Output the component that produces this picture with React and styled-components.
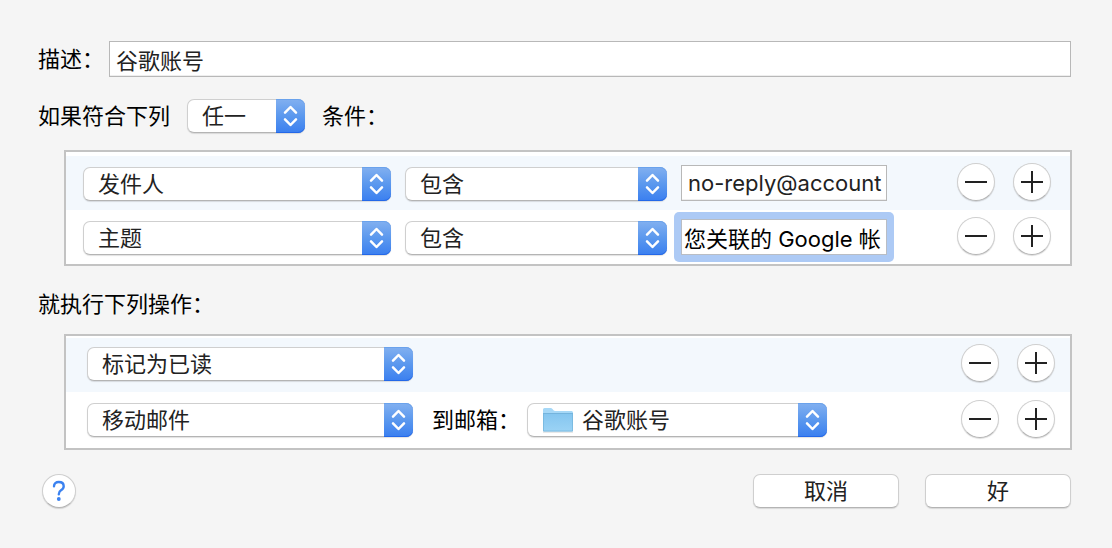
import React from "react";
import styled, { createGlobalStyle } from "styled-components";

const GlobalStyle = createGlobalStyle`
  *, *::before, *::after { box-sizing: border-box; }
  body { margin: 0; background: #f5f5f5; }
  body, button, input, select {
    font-family: Inter, "Noto Sans CJK SC", sans-serif;
    font-size: 22px;
    line-height: 28px;
    color: #000;
  }
`;

const Dialog = styled.form`
  display: flex;
  flex-direction: column;
  padding: 41px 40px 40px 38px;
`;

const DescriptionRow = styled.div`
  display: flex;
  align-items: center;
  gap: 5px;
  padding-right: 1px;
`;

const MatchRow = styled.div`
  display: flex;
  align-items: center;
  gap: 17px;
  margin: 22px 0 17px;
`;

const Label = styled.label`
  white-space: nowrap;
`;

const Heading = styled.h2`
  margin: 24px 0 16px;
  font-size: 22px;
  font-weight: 400;
  line-height: 28px;
`;

const TextInput = styled.input`
  height: 36px;
  min-width: 0;
  padding: 0 2px 0 ${(p) => (p.$focused ? 2 : 6)}px;
  flex: ${(p) => (p.$width ? `0 0 ${p.$width}px` : "1")};
  border: 1px solid ${(p) => (p.$focused ? "#b9bdc4" : "#b8b8b8")};
  border-radius: 0;
  outline: none;
  background: #fff;
  color: ${(p) => (p.$focused ? "#000" : "#222")};
  box-shadow: ${(p) => (p.$focused ? "0 0 0 7px #adcaf5" : "inset 0 -1px 0 #eee")};
  ${(p) => p.$focused && "clip-path: inset(-7px round 5px);"}
`;

const Popup = styled.span`
  position: relative;
  display: block;
  flex: 0 0 ${(p) => p.$width}px;
  height: 34px;
`;

const PopupSelect = styled.select`
  appearance: none;
  display: block;
  width: 100%;
  height: 34px;
  padding: 0 34px 0 ${(p) => (p.$icon ? 54 : 14)}px;
  border: 1px solid #cfcfcf;
  border-bottom-color: #b4b4b4;
  border-radius: 7px;
  background: #fff;
  color: #222;
  box-shadow: 0 1px 1px rgba(0, 0, 0, 0.12);
`;

const PopupArrows = styled.span`
  position: absolute;
  top: 0;
  right: 0;
  width: 29px;
  height: 34px;
  border-radius: 0 7px 7px 0;
  background: linear-gradient(#82b0f0, #5b98ee 50%, #3a7ff0);
  box-shadow: inset 0 1px 0 #6aa2ec, inset 0 -1px 0 #2468e8;
  pointer-events: none;

  svg { display: block; }
`;

const PopupIcon = styled.span`
  position: absolute;
  top: 4px;
  left: 15px;
  pointer-events: none;

  svg { display: block; }
`;

const Panel = styled.section`
  margin-left: 26px;
  padding-top: ${(p) => p.$top}px;
  border: 2px solid #c3c3c3;
  background: #fff;
`;

const RuleRow = styled.div`
  display: flex;
  align-items: center;
  justify-content: space-between;
  height: 54px;
  padding: 0 19px 0 17px;
  background: ${(p) => (p.$striped ? "#f3f8fd" : "#fff")};
`;

const ActionRow = styled(RuleRow)`
  height: 56px;
  padding: 0 15px 0 21px;
  background: ${(p) => (p.$striped ? "linear-gradient(#fff 2px, #f3f8fd 2px)" : "#fff")};
`;

const Fields = styled.div`
  display: flex;
  align-items: flex-end;
  gap: 14px;
`;

const MailboxField = styled.div`
  display: flex;
  align-items: center;
  gap: 7px;
  padding-left: 5px;
`;

const Steppers = styled.div`
  display: flex;
  gap: 18px;
  padding-bottom: 2px;
`;

const RoundButton = styled.button`
  display: grid;
  place-items: center;
  width: ${(p) => p.$size}px;
  height: ${(p) => p.$size}px;
  padding: 0;
  border: 1px solid #cfcfcf;
  border-bottom-color: #b4b4b4;
  border-radius: 50%;
  background: #fff;
  box-shadow: 0 1px 1px rgba(0, 0, 0, 0.14);

  svg { display: block; }
`;

const Footer = styled.footer`
  display: flex;
  align-items: center;
  justify-content: space-between;
  margin-top: 24px;
  padding: 0 1px 0 4px;
`;

const FooterButtons = styled.div`
  display: flex;
  gap: 26px;
`;

const PushButton = styled.button`
  width: 146px;
  height: 34px;
  padding: 0;
  border: 1px solid #cfcfcf;
  border-bottom-color: #b4b4b4;
  border-radius: 7px;
  background: #fff;
  color: #222;
  box-shadow: 0 1px 1px rgba(0, 0, 0, 0.12);
`;

function PopupMenu({ id, label, width, value, icon }) {
  return (
    <Popup $width={width}>
      <PopupSelect id={id} aria-label={label} defaultValue={value} $icon={Boolean(icon)}>
        <option>{value}</option>
      </PopupSelect>
      {icon && <PopupIcon>{icon}</PopupIcon>}
      <PopupArrows>
        <svg width="29" height="34" viewBox="0 0 29 34" fill="none" stroke="#fff" strokeWidth="2.5" strokeLinecap="round" strokeLinejoin="round" aria-hidden="true">
          <path d="M9 13.7 14.5 8l5.5 5.7M9 20.3 14.5 26l5.5-5.7" />
        </svg>
      </PopupArrows>
    </Popup>
  );
}

function FolderIcon() {
  return (
    <svg width="32" height="27" viewBox="0 0 32 27" aria-hidden="true">
      <defs>
        <linearGradient id="folderFront" x1="0" y1="0" x2="0" y2="1">
          <stop offset="0" stopColor="#84c5ef" />
          <stop offset="1" stopColor="#9bd3f5" />
        </linearGradient>
      </defs>
      <path d="M1 24.5h30v1H1z" fill="#000" opacity=".18" />
      <path d="M1 2.5Q1 1 2.500 1H8.500Q9.700 1 10.500 2L11.500 3.200Q12 4 13.200 4H29.500Q31 4 31 5.500V10H1Z" fill="#a6d8f7" />
      <path d="M1 6h30v17.500q0 1-1 1H2q-1 0-1-1z" fill="url(#folderFront)" />
      <path d="M1 6.500h30" stroke="#74b4dd" />
      <path d="M1.500 7v17h29V7" fill="none" stroke="#72b3da" opacity=".7" />
    </svg>
  );
}

function RowSteppers() {
  return (
    <Steppers>
      <RoundButton type="button" $size={38} aria-label="移除">
        <svg width="22" height="22" viewBox="0 0 22 22" stroke="#222" strokeWidth="2" aria-hidden="true">
          <path d="M0 11h22" />
        </svg>
      </RoundButton>
      <RoundButton type="button" $size={38} aria-label="添加">
        <svg width="22" height="22" viewBox="0 0 22 22" stroke="#222" strokeWidth="2" aria-hidden="true">
          <path d="M0 11h22M11 0v22" />
        </svg>
      </RoundButton>
    </Steppers>
  );
}

const conditions = [
  { field: "发件人", value: "no-reply@account" },
  { field: "主题", value: "您关联的 Google 帐", focused: true },
];

export default function App() {
  return (
    <>
      <GlobalStyle />
      <Dialog lang="zh-CN" onSubmit={(e) => e.preventDefault()}>
        <DescriptionRow>
          <Label htmlFor="description">描述：</Label>
          <TextInput id="description" type="text" defaultValue="谷歌账号" />
        </DescriptionRow>

        <MatchRow>
          <Label htmlFor="match">如果符合下列</Label>
          <PopupMenu id="match" width={118} value="任一" />
          <Label htmlFor="match">条件：</Label>
        </MatchRow>

        <Panel $top={4}>
          {conditions.map((c, i) => (
            <RuleRow key={c.field} $striped={i % 2 === 0}>
              <Fields>
                <PopupMenu label="字段" width={308} value={c.field} />
                <PopupMenu label="匹配方式" width={262} value="包含" />
                <TextInput type="text" aria-label="内容" defaultValue={c.value} $width={206} $focused={c.focused} />
              </Fields>
              <RowSteppers />
            </RuleRow>
          ))}
        </Panel>

        <Heading>就执行下列操作：</Heading>

        <Panel $top={0}>
          <ActionRow $striped>
            <PopupMenu label="操作" width={326} value="标记为已读" />
            <RowSteppers />
          </ActionRow>
          <ActionRow>
            <Fields>
              <PopupMenu label="操作" width={326} value="移动邮件" />
              <MailboxField>
                <Label htmlFor="mailbox">到邮箱：</Label>
                <PopupMenu id="mailbox" width={300} value="谷歌账号" icon={<FolderIcon />} />
              </MailboxField>
            </Fields>
            <RowSteppers />
          </ActionRow>
        </Panel>

        <Footer>
          <RoundButton type="button" $size={34} aria-label="帮助">
            <svg width="14" height="22" viewBox="0 0 14 22" fill="none" aria-hidden="true">
              <path d="M2 6.200C2 3.500 4 2 6.700 2C9.600 2 11.700 3.600 11.700 6.200C11.700 8.300 10.600 9.300 9 10.300C7.400 11.300 6.800 12 6.800 14.200" stroke="#3b82f0" strokeWidth="2.400" strokeLinecap="round" />
              <circle cx="6.800" cy="19" r="1.900" fill="#3b82f0" />
            </svg>
          </RoundButton>
          <FooterButtons>
            <PushButton type="button">取消</PushButton>
            <PushButton type="submit">好</PushButton>
          </FooterButtons>
        </Footer>
      </Dialog>
    </>
  );
}
